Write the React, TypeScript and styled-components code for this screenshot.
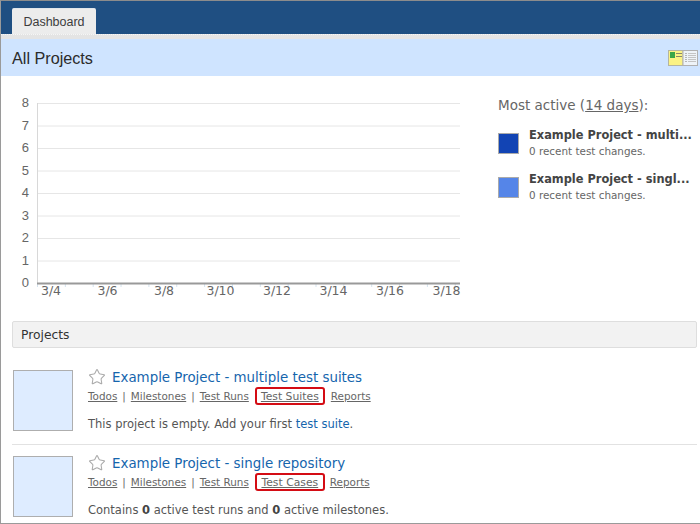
import React from "react";
import styled, { createGlobalStyle } from "styled-components";
import { Star } from "lucide-react";

const GlobalStyle = createGlobalStyle`
  html, body {
    margin: 0;
    padding: 0;
    background: #fff;
  }
  body {
    font-family: "DejaVu Sans", Verdana, sans-serif;
    color: #444;
  }
`;

const Page = styled.div`
  width: 700px;
  height: 524px;
  box-sizing: border-box;
  border-top: 1px solid #8c8c8c;
  border-left: 1px solid #9a9a9a;
  border-bottom: 1px solid #9a9a9a;
  overflow: hidden;
  background: #fff;
`;

const Header = styled.div`
  height: 33px;
  background: #1f4f82;
  display: flex;
  align-items: flex-end;
  padding-left: 11px;
`;

const Tab = styled.div`
  width: 84px;
  height: 26px;
  background: #ececec;
  border-radius: 2px 2px 0 0;
  border-top: 1px solid #dfe5ea;
  box-sizing: border-box;
  display: flex;
  align-items: center;
  justify-content: center;
  font-family: "Liberation Sans", Arial, sans-serif;
  font-size: 12.5px;
  color: #3d3d3d;
`;

const Strip = styled.div`
  height: 5px;
  box-sizing: border-box;
  background: #e4e4e4;
  border-top: 1px dotted #f6f6f6;
`;

const TitleBar = styled.div`
  height: 37px;
  background: #cfe4ff;
  display: flex;
  align-items: center;
  justify-content: space-between;
  padding: 0 2px 0 11px;
`;

const Title = styled.h1`
  margin: 1px 0 0;
  font-family: "Liberation Sans", Arial, sans-serif;
  font-size: 16.2px;
  font-weight: 400;
  color: #2b2b2b;
`;

const Overview = styled.div`
  display: flex;
  height: 245px;
`;

const ChartWrap = styled.div`
  width: 497px;
  flex: none;
`;

const Side = styled.div`
  flex: 1;
  min-width: 0;
  padding-top: 21px;
`;

const SideTitle = styled.div`
  font-size: 13.5px;
  line-height: 17px;
  color: #666;
  margin-bottom: 13px;

  span {
    text-decoration: underline;
  }
`;

const Legend = styled.div`
  display: flex;
  gap: 10px;
  height: 44px;
`;

const Swatch = styled.div<{ $color: string }>`
  width: 21px;
  height: 21px;
  margin-top: 6px;
  flex: none;
  box-sizing: border-box;
  border: 1px solid #aaa;
  background: ${(p) => p.$color};
`;

const LegendText = styled.div`
  min-width: 0;
  width: 162px;
`;

const LegendName = styled.div`
  font-size: 11.4px;
  font-weight: 700;
  line-height: 16px;
  color: #444;
  white-space: nowrap;
`;

const LegendSub = styled.div`
  font-size: 10.4px;
  line-height: 17px;
  color: #666;
  white-space: nowrap;
`;

const SectionBar = styled.div`
  margin: 0 3px 0 11px;
  height: 27px;
  box-sizing: border-box;
  background: #f2f2f2;
  border: 1px solid #dedede;
  border-radius: 2px;
  padding-left: 8px;
  display: flex;
  align-items: center;
  font-size: 12.3px;
  font-weight: 500;
  color: #333;
`;

const ProjectList = styled.div`
  margin: 22px 3px 0 11px;
`;

const Project = styled.div<{ $divider?: boolean }>`
  display: flex;
  gap: 15px;
  height: ${(p) => (p.$divider ? 74 : 66)}px;
  border-bottom: ${(p) => (p.$divider ? "1px solid #e2e2e2" : "none")};
  margin-bottom: ${(p) => (p.$divider ? 11 : 0)}px;
`;

const Thumb = styled.div`
  width: 60px;
  height: 61px;
  margin-left: 1px;
  flex: none;
  box-sizing: border-box;
  background: #deecff;
  border: 1px solid #aeaeae;
`;

const Info = styled.div`
  min-width: 0;
`;

const NameRow = styled.div`
  display: flex;
  align-items: center;
  gap: 6px;
  height: 14px;
`;

const ProjectName = styled.a`
  font-size: 13.4px;
  color: #1565ad;
`;

const Links = styled.div`
  display: flex;
  align-items: center;
  height: 18px;
  margin-top: 3px;
  font-size: 10.4px;
  color: #666;
`;

const NavLink = styled.a`
  color: #666;
  text-decoration: underline;
`;

const Sep = styled.span`
  margin: 0 5px;
`;

const Boxed = styled.span<{ $after: number }>`
  display: flex;
  align-items: center;
  justify-content: center;
  box-sizing: border-box;
  height: 18px;
  width: 70px;
  margin: 0 ${(p) => p.$after}px 0 6px;
  border: 2px solid #d40c14;
  border-radius: 3px;
  font-size: 10.8px;
`;

const Status = styled.div`
  margin-top: 11px;
  font-size: 11.5px;
  line-height: 16px;
  color: #555;

  a {
    color: #1565ad;
  }
  b {
    color: #444;
  }
`;

const yTicks = [0, 1, 2, 3, 4, 5, 6, 7, 8];
const xLabels = ["3/4", "3/6", "3/8", "3/10", "3/12", "3/14", "3/16", "3/18"];

const Chart = () => {
  // coordinates here are relative to the chart block, which starts at y=76
  const top = 27;
  const bottom = 207;
  const left = 36;
  const right = 459;
  const stepY = (bottom - top) / 8;
  const stepX = 27.85;

  return (
    <svg width={497} height={245} style={{ display: "block" }}>
      {yTicks.map((v) => {
        const y = bottom - v * stepY;
        return (
          <g key={v}>
            {v > 0 && <line x1={left} x2={right} y1={y + 0.5} y2={y + 0.5} stroke="#e6e6e6" />}
            <text x={28} y={y + 4} textAnchor="end" fontSize={13} fill="#666" fontFamily="Liberation Sans, Arial, sans-serif">
              {v}
            </text>
          </g>
        );
      })}
      <line x1={left + 0.5} x2={left + 0.5} y1={top} y2={bottom} stroke="#d8d8d8" />
      {Array.from({ length: 16 }).map((_, i) => (
        <line key={i} x1={left + 0.5 + i * stepX} x2={left + 0.5 + i * stepX} y1={bottom} y2={bottom + 4} stroke="#d5e3ee" />
      ))}
      <line x1={left} x2={right} y1={bottom + 0.5} y2={bottom + 0.5} stroke="#999" strokeWidth={2} />
      {xLabels.map((l, i) => (
        <text key={l} x={50 + i * 56.5} y={219} textAnchor="middle" fontSize={12.5} fill="#666" fontFamily="DejaVu Sans, Verdana, sans-serif">
          {l}
        </text>
      ))}
    </svg>
  );
};

const ViewToggle = () => (
  <svg width={30} height={16} viewBox="0 0 30 16" style={{ display: "block" }}>
    <rect x={0.5} y={0.5} width={14.5} height={15} fill="#fbf284" stroke="#b5b5a0" />
    <rect x={2} y={2} width={5} height={6} fill="#3aa548" />
    <rect x={8} y={3} width={6} height={1} fill="#8a8a6a" />
    <rect x={8} y={6} width={6} height={1} fill="#8a8a6a" />
    <rect x={15} y={0.5} width={14.5} height={15} fill="#eef3f8" stroke="#b0b0b0" />
    {[3, 5, 7, 9, 11].map((y) => (
      <g key={y}>
        <rect x={17} y={y} width={2} height={1} fill="#b5b5b5" />
        <rect x={20} y={y} width={8} height={1} fill="#c4c4c4" />
      </g>
    ))}
  </svg>
);

const ProjectLinks = ({ boxed, after }: { boxed: string; after: number }) => (
  <Links>
    <NavLink>Todos</NavLink>
    <Sep>|</Sep>
    <NavLink>Milestones</NavLink>
    <Sep>|</Sep>
    <NavLink>Test Runs</NavLink>
    <Boxed $after={after}>
      <NavLink>{boxed}</NavLink>
    </Boxed>
    <NavLink>Reports</NavLink>
  </Links>
);

const FavStar = () => <Star size={18} color="#aaa" strokeWidth={1.4} />;

export default function App() {
  return (
    <>
      <GlobalStyle />
      <Page>
        <Header>
          <Tab>Dashboard</Tab>
        </Header>
        <Strip />
        <TitleBar>
          <Title>All Projects</Title>
          <ViewToggle />
        </TitleBar>
        <Overview>
          <ChartWrap>
            <Chart />
          </ChartWrap>
          <Side>
            <SideTitle>
              Most active (<span>14 days</span>):
            </SideTitle>
            <Legend>
              <Swatch $color="#1244b4" />
              <LegendText>
                <LegendName>Example Project - multi...</LegendName>
                <LegendSub>0 recent test changes.</LegendSub>
              </LegendText>
            </Legend>
            <Legend>
              <Swatch $color="#5585e8" />
              <LegendText>
                <LegendName>Example Project - singl...</LegendName>
                <LegendSub>0 recent test changes.</LegendSub>
              </LegendText>
            </Legend>
          </Side>
        </Overview>
        <SectionBar>Projects</SectionBar>
        <ProjectList>
          <Project $divider>
            <Thumb />
            <Info>
              <NameRow>
                <FavStar />
                <ProjectName>Example Project - multiple test suites</ProjectName>
              </NameRow>
              <ProjectLinks boxed="Test Suites" after={6} />
              <Status>
                This project is empty. Add your first <a>test suite</a>.
              </Status>
            </Info>
          </Project>
          <Project>
            <Thumb />
            <Info>
              <NameRow>
                <FavStar />
                <ProjectName>Example Project - single repository</ProjectName>
              </NameRow>
              <ProjectLinks boxed="Test Cases" after={5} />
              <Status>
                Contains <b>0</b> active test runs and <b>0</b> active milestones.
              </Status>
            </Info>
          </Project>
        </ProjectList>
      </Page>
    </>
  );
}
